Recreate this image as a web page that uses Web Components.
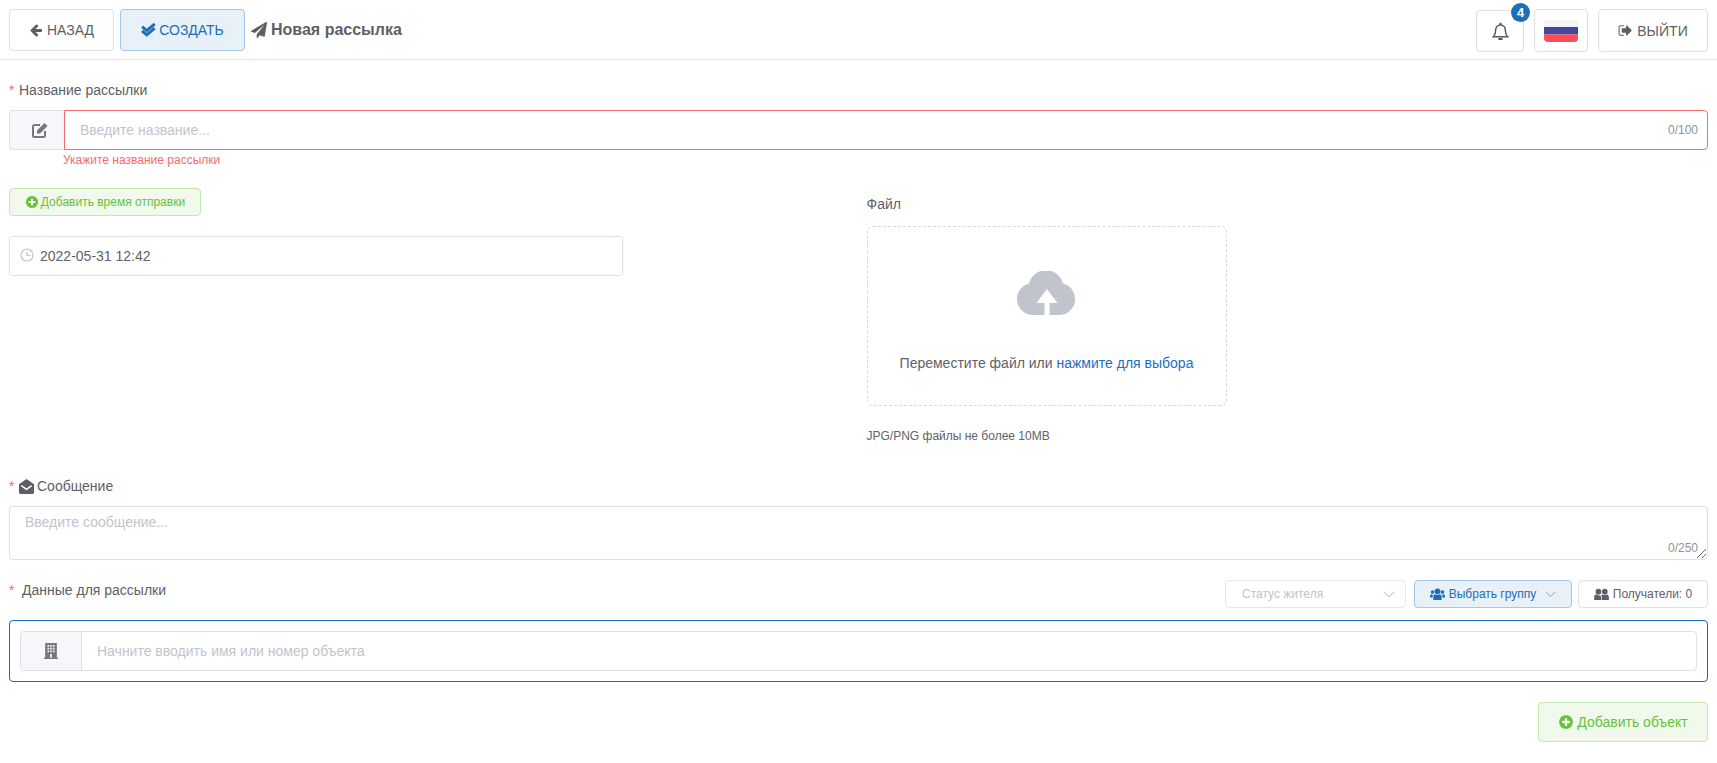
<!DOCTYPE html>
<html lang="ru"><head><meta charset="utf-8"><title>Новая рассылка</title>
<style>
html,body{margin:0;padding:0;background:#fff;color:#5c5f66;font:14px "Liberation Sans",Arial,sans-serif}
</style></head><body>
<x-header></x-header>
<x-main>
  <x-label req>Название рассылки</x-label>
  <x-name-input></x-name-input>
  <x-two-col></x-two-col>
  <x-label req icon="mail" style="margin-top:30px">Сообщение</x-label>
  <x-message></x-message>
  <x-recipients></x-recipients>
  <x-add-row></x-add-row>
</x-main>
<script>
const P={
 back:'<path d="M1664 896v128q0 53-32.5 90.5t-84.5 37.5h-704l293 294q38 36 38 90t-38 90l-75 76q-37 37-90 37-52 0-91-37l-651-652q-37-37-37-90 0-52 37-91l651-650q38-38 91-38 52 0 90 38l75 74q38 38 38 91t-38 91l-293 293h704q52 0 84.5 37.5t32.5 90.5z"/>',
 plane:'<path d="M1764 11q33 24 27 64l-256 1536q-5 29-32 45-14 8-31 8-11 0-24-5l-453-185-242 295q-18 23-49 23-13 0-22-4-19-7-30.5-23.5t-11.5-36.5v-349l864-1059-1069 925-395-162q-37-14-40-55-2-40 32-59l1664-960q15-9 32-9 20 0 36 11z"/>',
 edit:'<g transform="scale(112)"><path fill="none" stroke="currentColor" stroke-width="2" d="M13 9v4.500a1.500 1.500 0 0 1-1.500 1.500h-9A1.500 1.500 0 0 1 1 13.500v-9A1.500 1.500 0 0 1 2.500 3H8"/><path d="M5 8.500L12.500 1 15.500 4 8 11.500H5z"/></g>',
 plus:'<path d="M1344 960v-128q0-26-19-45t-45-19h-256v-256q0-26-19-45t-45-19h-128q-26 0-45 19t-19 45v256h-256q-26 0-45 19t-19 45v128q0 26 19 45t45 19h256v256q0 26 19 45t45 19h128q26 0 45-19t19-45v-256h256q26 0 45-19t19-45zm320-64q0 209-103 385.5t-279.5 279.5-385.5 103-385.5-103-279.5-279.5-103-385.5 103-385.5 279.5-279.5 385.5-103 385.5 103 279.5 279.5 103 385.5z"/>',
 exit:'<path d="M704 1440q0 4 1 20t.5 26.5-3 23.5-10 19.5-20.5 6.5h-320q-119 0-203.5-84.5t-84.5-203.5v-704q0-119 84.5-203.5t203.5-84.5h320q13 0 22.5 9.5t9.5 22.5q0 4 1 20t.5 26.5-3 23.5-10 19.5-20.5 6.5h-320q-66 0-113 47t-47 113v704q0 66 47 113t113 47h312l11.5 1 11.5 3 8 5.5 7 9 2 13.5zm928-544q0 26-19 45l-544 544q-19 19-45 19t-45-19-19-45v-288h-448q-26 0-45-19t-19-45v-384q0-26 19-45t45-19h448v-288q0-26 19-45t45-19 45 19l544 544q19 19 19 45z"/>',
 check:'<g fill="none" stroke="currentColor" stroke-width="360"><path d="M130 430l560 480 950-800"/><path d="M130 930l560 480 950-800"/></g>',
 mail:'<path d="M896 0L1792 616V1568a224 224 0 0 1-224 224H224a224 224 0 0 1-224-224V616z"/><path fill="none" stroke="#fff" stroke-width="190" d="M280 800L896 1240l616-440"/>',
 building:'<path fill-rule="evenodd" d="M240 0H1552V1648H1680V1792H112V1648H240zM500 230v190h190V230zM800 230v190h190V230zM1100 230v190h190V230zM500 540v190h190V540zM800 540v190h190V540zM1100 540v190h190V540zM500 850v190h190V850zM800 850v190h190V850zM1100 850v190h190V850zM800 1240V1648H990V1240z"/>',
 users:'<circle cx="896" cy="520" r="340"/><path d="M400 1560V1220q0-340 270-340 90 90 226 90t226-90q270 0 270 340v340z"/><circle cx="300" cy="600" r="220"/><circle cx="1492" cy="600" r="220"/><path d="M0 1260V1080q0-220 200-220 70 60 170 60-60 110-60 300v40z"/><path d="M1792 1260V1080q0-220-200-220-70 60-170 60 60 110 60 300v40z"/>',
 users2:'<circle cx="530" cy="560" r="340"/><path d="M20 1540V1240q0-340 270-340 100 80 240 80t240 80q100 100 100 260v220z"/><circle cx="1290" cy="560" r="340"/><path d="M950 1540v-270q0-210-130-340 60-20 110-10 170 50 360 50t300-80q190 50 190 340v310z"/>'
};
const ico=(n,s,extra='')=>`<svg viewBox="0 0 1792 1792" width="${s}" height="${s}" fill="currentColor" style="flex:none;display:block;${extra}">${P[n]}</svg>`;
const chev=(c='#c0c4cc',w=14)=>`<svg viewBox="0 0 14 8" width="${w}" height="${w*8/14}" fill="none" stroke="${c}" stroke-width="1.200" style="flex:none"><path d="M1 1l6 6 6-6"/></svg>`;
function def(name,css,html){
  customElements.define(name,class extends HTMLElement{
    constructor(){super();const r=this.attachShadow({mode:'open'});
      r.innerHTML=`<style>${css}</style>`+(typeof html==='function'?html(this):html);}
  });
}
def('x-btn',`:host{display:inline-flex;align-items:center;justify-content:center;box-sizing:border-box;border:1px solid #dfe1e8;border-radius:4px;background:#fff;color:#606266;font-size:14px;gap:4px;white-space:nowrap}
:host([kind=blue]){background:#e8f0f8;border-color:#a3c6e6;color:#1b6fb9}
:host([kind=green]){background:#f0f9eb;border-color:#c2e7b0;color:#67c23a}`,`<slot></slot>`);

def('x-header',`:host{display:flex;align-items:flex-start;height:50px;border-bottom:1px solid #e4e4e8;padding:9px 9px 0;justify-content:space-between}
.l,.r{display:flex;align-items:flex-start}
.title{display:flex;align-items:center;height:42px;font-size:16px;font-weight:700;color:#5c5f66;margin-left:6px;gap:4px}
.bell{position:relative;margin-top:1px}
.badge{position:absolute;left:35px;top:-7px;width:19px;height:19px;border-radius:50%;background:#1b6fb9;color:#fff;font-size:13px;font-weight:700;display:flex;align-items:center;justify-content:center}
svg{display:block}
`,`<div class="l">
  <x-btn style="width:105px;height:42px;color:#5c5f66">${ico('back',14)}НАЗАД</x-btn>
  <x-btn kind="blue" style="width:125px;height:42px;margin-left:6px;gap:3px">${ico('check',15)}СОЗДАТЬ</x-btn>
  <div class="title">${ico('plane',16,'color:#5c5f66')}<span>Новая рассылка</span></div>
</div>
<div class="r">
  <div class="bell"><x-btn style="width:48px;height:42px;color:#5c5f66"><svg viewBox="0 0 18 20" width="17" height="19" fill="none" stroke="#55575c" stroke-width="1.600"><path d="M1.500 15.500c1.600-1.600 2.300-3 2.300-6.500C3.800 5.600 6 3 9 3s5.200 2.600 5.200 6c0 3.500.7 4.900 2.300 6.500z"/><path d="M9 .8v2.400M6.800 18h4.400" stroke-width="2"/></svg></x-btn><span class="badge">4</span></div>
  <x-btn style="width:54px;height:43px;margin-left:10px"><svg width="34" height="22" viewBox="0 0 34 22"><defs><clipPath id="f"><rect width="34" height="22" rx="4"/></clipPath></defs><g clip-path="url(#f)"><rect width="34" height="7" fill="#f5f5f5"/><rect y="7" width="34" height="7.500" fill="#41479b"/><rect y="14.500" width="34" height="7.500" fill="#ff4b55"/></g></svg></x-btn>
  <x-btn style="width:110px;height:43px;margin-left:10px;color:#5c5f66">${ico('exit',15)}ВЫЙТИ</x-btn>
</div>`);

def('x-main',`:host{display:block;padding:20px 9px 0}`,`<slot></slot>`);

def('x-label',`:host{display:flex;align-items:center;height:20px;margin-bottom:10px;font-size:14px;color:#5c5f66}
.s{color:#f56c6c;width:10px;flex:none}svg{margin-right:3px}`,
el=>`${el.hasAttribute('req')?'<span class="s">*</span>':''}${el.getAttribute('icon')?ico(el.getAttribute('icon'),15):''}<slot></slot>`);

def('x-name-input',`:host{display:block}
.row{display:flex;height:40px;box-sizing:border-box}
.pre{width:55px;flex:none;box-sizing:border-box;background:#f5f7fa;border:1px solid #dfe1e8;border-right:0;border-radius:4px 0 0 4px;display:flex;align-items:center;justify-content:center;padding-left:5px;color:#77787c}
.inp{flex:1;border:1px solid #f56c6c;border-radius:0 4px 4px 0;display:flex;align-items:center;justify-content:space-between;padding:0 9px 0 15px;color:#c0c4cc}
.cnt{font-size:12px;color:#909399}
.err{height:20px;line-height:20px;font-size:12px;color:#f56c6c;margin-left:54px}`,
`<div class="row"><div class="pre">${ico('edit',16)}</div><div class="inp"><span>Введите название...</span><span class="cnt">0/100</span></div></div><div class="err">Укажите название рассылки</div>`);

def('x-two-col',`:host{display:flex;padding-top:18px}
.a,.b{flex:0 0 50%;box-sizing:border-box}
.b{padding-left:8px;padding-top:6px}
.add{display:flex;width:192px;height:28px;font-size:12px;gap:2px;margin-bottom:20px}
.date{height:40px;box-sizing:border-box;border:1px solid #dfe1e8;border-radius:4px;display:flex;align-items:center;padding-left:10px;gap:6px;color:#606266;width:614px}
.lab{height:20px;line-height:20px;margin-bottom:12px}
.up{width:360px;height:180px;box-sizing:border-box;border:1px dashed #d9d9d9;border-radius:6px;display:flex;flex-direction:column;align-items:center;padding-top:44px}
.up p{margin:38px 0 0;line-height:20px;color:#606266}.up a{color:#1b6fb9}
.hint{margin-top:20px;height:20px;line-height:20px;font-size:12px;color:#606266}
`,`<div class="a">
  <x-btn kind="green" class="add">${ico('plus',14)}Добавить время отправки</x-btn>
  <div class="date"><svg width="14" height="14" viewBox="0 0 14 14" fill="none" stroke="#c0c4cc" stroke-width="1.200" style="flex:none;margin-top:-2px"><circle cx="7" cy="7" r="6"/><path d="M7 3.500V7.500H10.500"/></svg><span>2022-05-31 12:42</span></div>
</div>
<div class="b">
  <div class="lab">Файл</div>
  <div class="up"><svg width="59" height="44" viewBox="0 0 59 44"><path fill="#c0c4cc" d="M16 44A16 16 0 0 1 12 12.500 17.500 17.500 0 0 1 46 12.500 16 16 0 0 1 43 44z"/><path fill="#fff" d="M30 18L40.500 32H32.500V44H27.500V32H19.500z"/></svg>
  <p>Переместите файл или <a>нажмите для выбора</a></p></div>
  <div class="hint">JPG/PNG файлы не более 10MB</div>
</div>`);

def('x-message',`:host{display:block;position:relative;height:54px;box-sizing:border-box;border:1px solid #dfe1e8;border-radius:4px;padding:5px 15px;color:#c0c4cc;line-height:21px}
.cnt{position:absolute;right:9px;bottom:3px;font-size:12px;color:#909399;line-height:16px}
svg{position:absolute;right:1px;bottom:1px}`,
`<span>Введите сообщение...</span><span class="cnt">0/250</span><svg width="9" height="9" viewBox="0 0 9 9" stroke="#666" fill="none"><path d="M0 9L9 0M5 9L9 5"/></svg>`);

def('x-recipients',`:host{display:block;padding-top:20px}
.top{display:flex;justify-content:space-between;height:28px;margin-bottom:12px}
.t{display:flex;align-items:flex-start;line-height:20px;color:#5c5f66}.s{color:#f56c6c;width:13px}
.ctr{display:flex}
.sel{width:181px;height:28px;box-sizing:border-box;border:1px solid #e4e7ed;border-radius:4px;display:flex;align-items:center;justify-content:space-between;padding:0 10px 0 16px;color:#c0c4cc;font-size:12px}
.box{box-sizing:border-box;height:62px;border:1px solid #176bb8;border-radius:4px;padding:10px}
.in{display:flex;height:40px;box-sizing:border-box;border:1px solid #dfe1e8;border-radius:4px}
.pre{width:61px;box-sizing:border-box;background:#f5f7fa;border-right:1px solid #dfe1e8;border-radius:4px 0 0 4px;display:flex;align-items:center;justify-content:center;color:#77787c}
.ph{padding-left:15px;color:#c0c4cc;line-height:38px}
`,`<div class="top"><div class="t"><span class="s">*</span>Данные для рассылки</div>
<div class="ctr"><div class="sel"><span>Статус жителя</span>${chev('#c0c4cc',12)}</div>
<x-btn kind="blue" style="width:158px;height:28px;margin-left:8px;font-size:12px;gap:4px">${ico('users',15)}<span>Выбрать группу</span><span style="width:1px"></span>${chev('#7fa9cf',11)}</x-btn>
<x-btn style="width:130px;height:28px;margin-left:6px;font-size:12px;gap:4px;color:#5c5f66">${ico('users2',15)}Получатели: 0</x-btn></div></div>
<div class="box"><div class="in"><div class="pre">${ico('building',16)}</div><div class="ph">Начните вводить имя или номер объекта</div></div></div>`);

def('x-add-row',`:host{display:flex;justify-content:flex-end;padding-top:20px}`,
`<x-btn kind="green" style="width:170px;height:40px;gap:3px">${ico('plus',16)}Добавить объект</x-btn>`);
</script>
</body></html>
